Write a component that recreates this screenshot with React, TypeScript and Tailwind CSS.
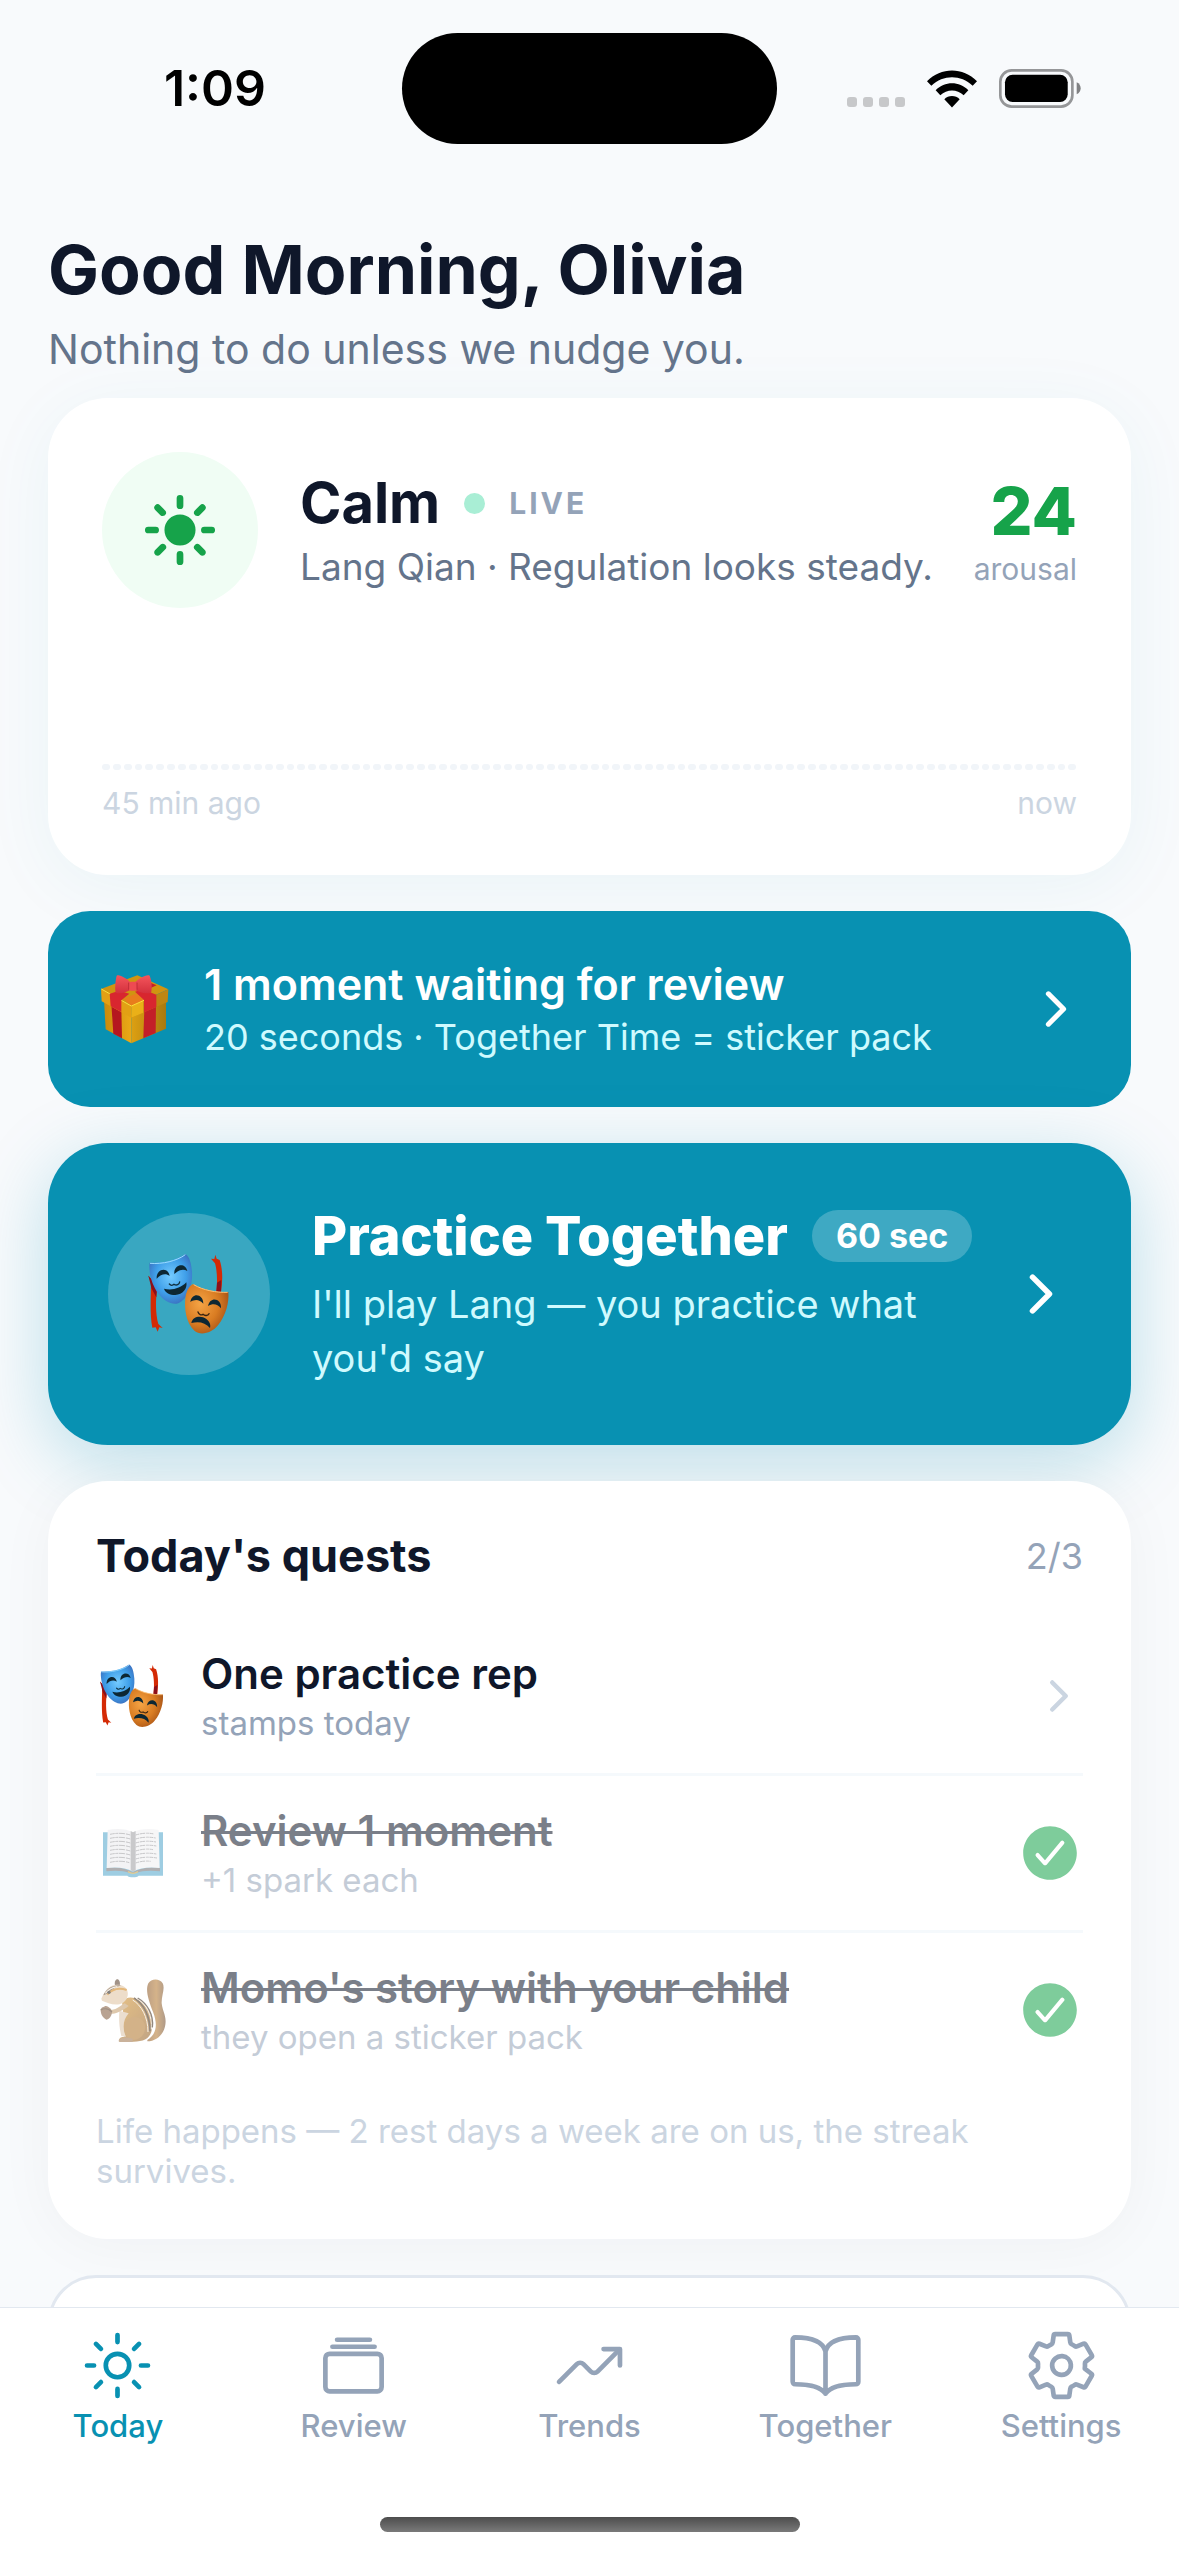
import type { ReactNode } from "react";
import {
  IoAlbumsOutline,
  IoBookOutline,
  IoCheckmarkCircle,
  IoChevronForward,
  IoSettingsOutline,
  IoSunny,
  IoSunnyOutline,
  IoTrendingUpOutline,
} from "react-icons/io5";

const tabs = [
  { label: "Today", icon: IoSunnyOutline, active: true },
  { label: "Review", icon: IoAlbumsOutline, active: false },
  { label: "Trends", icon: IoTrendingUpOutline, active: false },
  { label: "Together", icon: IoBookOutline, active: false },
  { label: "Settings", icon: IoSettingsOutline, active: false },
];

// one slot per 30 seconds, nothing recorded yet
const samples = Array.from({ length: 90 }, () => 0);

type Quest = { title: string; note: string; icon: ReactNode; done: boolean };

function GiftIcon() {
  return (
    <svg viewBox="48 69 216 216" className="size-[72px] shrink-0 overflow-visible" aria-hidden="true">
      <defs>
        <linearGradient id="giftLeft" x1="0" y1="0" x2="1" y2="0">
          <stop offset="0" stopColor="#c98a0c" />
          <stop offset="1" stopColor="#eba917" />
        </linearGradient>
        <linearGradient id="giftRight" x1="0" y1="0" x2="1" y2="0">
          <stop offset="0" stopColor="#dda012" />
          <stop offset="1" stopColor="#a8790f" />
        </linearGradient>
        <linearGradient id="giftBow" x1="0" y1="0" x2="0" y2="1">
          <stop offset="0" stopColor="#f4555c" />
          <stop offset="1" stopColor="#d3303c" />
        </linearGradient>
      </defs>
      <path d="M72 150 L154 195 V280 L77 238 Z" fill="url(#giftLeft)" />
      <path d="M154 195 L258 152 V236 L154 280 Z" fill="url(#giftRight)" />
      <path d="M94 160 L124 178 L126 265 L100 251 Z" fill="#b5161f" />
      <path d="M193 178 L228 164 L227 249 L190 265 Z" fill="#c31f28" />
      <path d="M63 117 L172 76 L265 118 L154 168 Z" fill="#d09411" />
      <path d="M130 146 L190 122 L212 142 L154 168 Z" fill="#e87d1c" />
      <path d="M63 117 L154 168 V203 L65 154 Z" fill="#e2a014" />
      <path d="M154 168 L265 118 L263 156 L154 203 Z" fill="#bd8612" />
      <path d="M154 168 L190 152 V188 L154 203 Z" fill="#eab018" />
      <path d="M64 117 L154 168 L192 151" fill="none" stroke="#ffe03a" strokeWidth="3" />
      <path d="M89 131 L118 122 L148 131 L124 151 V186 L92 169 Z" fill="#d8262f" />
      <path d="M165 125 L188 118 L229 134 V171 L192 187 V150 Z" fill="#d8262f" />
      <path d="M200 94 L230 106 L212 114 Z" fill="#c3202b" />
      <path d="M155 101 C140 84 117 72 110 77 C106 92 104 116 107 128 C122 134 141 126 155 117 Z" fill="url(#giftBow)" />
      <path d="M160 101 C176 85 200 72 209 77 C215 91 217 116 213 128 C196 134 175 126 161 117 Z" fill="url(#giftBow)" />
      <rect x="145" y="95" width="27" height="27" rx="9" fill="#ee4a52" />
      <path d="M146 98 V119 M171 98 V119" stroke="#a91d2c" strokeWidth="2" />
    </svg>
  );
}

function MasksIcon({ className }: { className: string }) {
  return (
    <svg viewBox="137 156 252 252" className={`shrink-0 overflow-visible ${className}`} aria-hidden="true">
      <defs>
        <radialGradient id="maskBlue" cx="0.5" cy="0.45" r="0.65">
          <stop offset="0" stopColor="#74cbff" />
          <stop offset="0.55" stopColor="#3f9fe9" />
          <stop offset="1" stopColor="#3a63b4" />
        </radialGradient>
        <radialGradient id="maskOrange" cx="0.35" cy="0.4" r="0.75">
          <stop offset="0" stopColor="#f5a445" />
          <stop offset="0.55" stopColor="#d97c22" />
          <stop offset="1" stopColor="#9c4a14" />
        </radialGradient>
      </defs>
      <path
        d="M141 227 L153 240 L167 264 C163 300 162 340 171 372 L184 384 L174 382 L169 395 L163 382 L153 383 C145 340 149 290 149 246 Z"
        fill="#d42a05"
      />
      <path d="M141 227 L155 243 L167 264 L165 292 L151 266 Z" fill="#8c0f1a" />
      <path d="M342 164 L346 176 L355 180 C365 210 364 244 359 276 H345 C349 244 347 210 341 190 L329 176 L339 177 Z" fill="#d42a05" />
      <path d="M360 240 L359 276 H345 L347 248 Z" fill="#8c0f1a" />
      <path d="M145 188 C184 190 224 181 252 162 C264 168 270 190 272 216 C275 262 254 304 226 311 C190 315 155 272 146 222 C144 208 143 196 145 188 Z" fill="url(#maskBlue)" />
      <path d="M146 190 C184 193 226 183 252 164" fill="none" stroke="#9bdcff" strokeWidth="3" />
      <path d="M166 236 C164 206 200 198 205 228 C194 219 180 221 166 236 Z" fill="#0d2733" />
      <path d="M219 222 C216 193 252 185 258 213 C247 207 234 208 219 222 Z" fill="#0d2733" />
      <path d="M204 252 C208 257 214 257 218 253 C226 258 234 253 235 246" fill="none" stroke="#10303f" strokeWidth="4" strokeLinecap="round" />
      <path d="M188 266 C210 272 238 266 255 247 C259 266 244 284 222 285 C205 285 192 278 188 266 Z" fill="#0d2733" />
      <path d="M275 252 C304 270 342 277 381 276 C384 306 374 346 350 376 C332 399 298 408 280 393 C252 367 249 320 252 296 C253 278 262 258 275 252 Z" fill="url(#maskOrange)" />
      <path d="M277 254 C306 271 344 278 379 277" fill="none" stroke="#ffc277" strokeWidth="3" />
      <path d="M267 306 C271 276 306 280 306 311 C294 298 281 297 267 306 Z" fill="#0d2733" />
      <path d="M320 318 C326 288 361 294 359 325 C348 311 334 310 320 318 Z" fill="#0d2733" />
      <path d="M290 336 C292 344 300 346 305 343 C310 348 320 348 323 341" fill="none" stroke="#3b2410" strokeWidth="4" strokeLinecap="round" />
      <path d="M270 369 C274 348 300 346 315 357 C325 364 329 376 326 384 C312 367 292 363 270 369 Z" fill="#0d2733" />
    </svg>
  );
}

function OpenBookIcon() {
  return (
    <svg viewBox="48 531 216 216" className="size-[72px] shrink-0" aria-hidden="true">
      <path d="M69 577 H249 V707 H176 C172 713 146 713 142 707 H69 Z" fill="#4fa6cc" />
      <path d="M79 684 C108 680 138 684 158 697 C180 684 210 680 240 684 V694 C212 690 186 692 168 699 H149 C130 692 106 690 79 694 Z" fill="#6f6f72" />
      <path d="M83 570 C110 564 140 566 159 577 V694 C138 683 110 680 80 684 Z" fill="#ebebee" />
      <path d="M236 570 C208 564 178 566 159 577 V694 C180 683 210 680 239 684 Z" fill="#f0f0f2" />
      <path d="M152 573 L159 577 L167 573 V690 L159 695 L152 690 Z" fill="#9d9da1" />
      <path
        d="M90 583 Q122 576 151 585 M90 595 Q122 588 151 597 M90 607 Q122 600 151 609 M90 619 Q122 612 151 621 M90 631 Q122 624 151 633 M90 643 Q122 636 151 645 M90 655 Q122 648 151 657 M90 667 Q122 660 148 668"
        fill="none"
        stroke="#9a9a9e"
        strokeWidth="3"
        strokeDasharray="14 2 9 2 18 3"
      />
      <path
        d="M167 585 Q196 576 222 582 M167 597 Q196 588 227 594 M167 609 Q196 600 228 606 M167 621 Q196 612 229 618 M167 633 Q196 624 219 629 M167 645 Q196 636 229 642 M167 657 Q196 648 231 654 M167 669 Q190 661 212 664"
        fill="none"
        stroke="#9a9a9e"
        strokeWidth="3"
        strokeDasharray="11 2 16 3 8 2"
      />
      <path d="M144 695 Q159 705 174 695" fill="none" stroke="#c9a53c" strokeWidth="4" />
    </svg>
  );
}

function ChipmunkIcon() {
  return (
    <svg viewBox="48 1002 216 216" className="size-[72px] shrink-0" aria-hidden="true">
      <defs>
        <linearGradient id="chipmunkTail" x1="0" y1="0" x2="1" y2="0">
          <stop offset="0" stopColor="#8a5422" />
          <stop offset="0.5" stopColor="#b3752a" />
          <stop offset="1" stopColor="#6f4826" />
        </linearGradient>
        <linearGradient id="chipmunkBody" x1="0" y1="0" x2="1" y2="1">
          <stop offset="0" stopColor="#cf8b22" />
          <stop offset="1" stopColor="#8f5a20" />
        </linearGradient>
      </defs>
      <path
        d="M202 1200 C232 1182 232 1150 220 1118 C204 1078 196 1050 205 1030 C213 1016 238 1014 248 1030 C256 1046 244 1066 245 1090 C248 1116 260 1128 256 1154 C252 1182 230 1204 202 1204 Z"
        fill="url(#chipmunkTail)"
      />
      <path d="M126 1084 C146 1062 178 1074 196 1098 C214 1122 222 1148 214 1176 C206 1198 190 1204 160 1205 H118 C114 1198 120 1190 134 1190 C118 1170 116 1146 130 1124 Z" fill="url(#chipmunkBody)" />
      <path d="M118 1112 C116 1140 118 1164 124 1188 L138 1190 C126 1164 130 1138 146 1120 Z" fill="#dcc4a8" />
      <path d="M136 1146 C150 1124 184 1126 194 1152 C200 1178 184 1198 160 1200 C132 1194 128 1166 136 1146 Z" fill="#b07428" />
      <path d="M162 1074 C192 1092 210 1130 210 1174" fill="none" stroke="#3a2716" strokeWidth="5" />
      <path d="M168 1074 C200 1092 218 1128 214 1168" fill="none" stroke="#f6ead8" strokeWidth="3" />
      <path d="M158 1080 C184 1096 204 1130 204 1176" fill="none" stroke="#f6ead8" strokeWidth="3" />
      <path d="M173 1074 C202 1090 222 1126 217 1162" fill="none" stroke="#3a2716" strokeWidth="4" />
      <path d="M105 1036 C102 1024 108 1016 114 1018 C120 1022 121 1030 119 1036 Z" fill="#553a26" />
      <path d="M64 1076 C70 1064 78 1046 94 1038 C112 1030 136 1036 142 1052 C148 1070 136 1088 118 1093 C98 1096 80 1088 66 1082 Z" fill="#dfc3a0" />
      <path d="M70 1066 C80 1044 100 1034 124 1036 C108 1040 96 1048 88 1058 Z" fill="#553a26" />
      <path d="M82 1064 C96 1048 116 1042 140 1050" fill="none" stroke="#cf7f10" strokeWidth="6" />
      <path d="M76 1060 C86 1048 98 1042 112 1040" fill="none" stroke="#f6ead8" strokeWidth="4" />
      <circle cx="87" cy="1057" r="5" fill="#1f1a17" />
      <path d="M146 1098 C128 1112 108 1122 90 1122 C82 1118 86 1110 94 1110 C112 1108 124 1096 134 1090 Z" fill="#c49c6a" />
      <path d="M62 1110 C64 1100 72 1102 75 1098 C82 1098 94 1104 96 1114 C96 1128 88 1138 80 1139 C68 1134 62 1122 62 1110 Z" fill="#80593a" />
      <path d="M62 1110 C72 1104 86 1106 96 1116" fill="none" stroke="#54371f" strokeWidth="4" />
      <path d="M116 1204 C116 1192 136 1190 158 1196 V1206 H120 Z" fill="#a0744a" />
    </svg>
  );
}

const quests: Quest[] = [
  { title: "One practice rep", note: "stamps today", icon: <MasksIcon className="m-[3px] size-[66px]" />, done: false },
  { title: "Review 1 moment", note: "+1 spark each", icon: <OpenBookIcon />, done: true },
  { title: "Momo's story with your child", note: "they open a sticker pack", icon: <ChipmunkIcon />, done: true },
];

function StatusBar() {
  return (
    <header className="grid h-[177px] shrink-0 grid-cols-[1fr_375px_1fr] items-start pt-[33px]">
      <div className="flex h-[111px] items-center justify-center pl-7 text-[50px] font-semibold text-black">1:09</div>
      <div className="h-[111px] rounded-full bg-black" />
      <div className="flex h-[111px] items-center justify-center gap-[22px] pr-7">
        <svg viewBox="0 0 58 38" className="h-[38px] w-[58px]" fill="#c7c8ca" aria-hidden="true">
          <rect x="0" y="27" width="10" height="10" rx="3" />
          <rect x="16" y="27" width="10" height="10" rx="3" />
          <rect x="32" y="27" width="10" height="10" rx="3" />
          <rect x="48" y="27" width="10" height="10" rx="3" />
        </svg>
        <svg viewBox="320 86 150 113" className="h-[38px] w-[50px]" aria-label="Wi-Fi">
          <path d="M320 119 C362 76 428 76 470 119 L457 133 C421 99 369 99 333 133 Z" />
          <path d="M346 146 C373 118 417 118 444 146 L430 161 C410 142 380 142 360 161 Z" />
          <path d="M372 173 C384 160 406 160 418 173 L395 198 Z" />
        </svg>
        <svg viewBox="537 84 247 117" className="h-[39px] w-[82px]" aria-label="Battery full">
          <rect x="541" y="88" width="217" height="109" rx="34" fill="none" stroke="#959698" strokeWidth="8" />
          <rect x="555" y="101" width="189" height="82" rx="23" />
          <path d="M771 124 C787 130 787 154 771 160 Z" fill="#808183" />
        </svg>
      </div>
    </header>
  );
}

function RegulationCard() {
  return (
    <section className="mt-6 rounded-[60px] bg-white p-[54px] shadow-[0_12px_72px_rgba(8,145,178,0.06)]">
      <div className="flex items-center">
        <div className="flex size-[156px] shrink-0 items-center justify-center rounded-full bg-[#f0fdf4]">
          <IoSunny className="size-[78px] text-[#16a34a]" />
        </div>
        <div className="ml-[42px] min-w-0 flex-1">
          <div className="flex items-center">
            <h2 className="text-[56px] leading-[68px] font-bold text-[#0f172a]">Calm</h2>
            <span className="ml-6 size-[21px] rounded-full bg-[#a9eed5]" />
            <span className="ml-6 text-[30px] leading-[36px] font-bold tracking-widest text-[#94a3b8]">LIVE</span>
          </div>
          <p className="mt-[6px] text-[37px] leading-[48px] whitespace-nowrap text-[#64748b]">
            Lang Qian · Regulation looks steady.
          </p>
        </div>
        <div className="text-right">
          <div className="text-[66px] leading-[78px] font-extrabold text-[#16a34a]">24</div>
          <div className="text-[30px] leading-[38px] text-[#94a3b8]">arousal</div>
        </div>
      </div>
      <div className="mt-[42px] flex h-[120px] items-end gap-[3px]">
        {samples.map((value, i) => (
          <div key={i} className="min-h-[6px] flex-1 rounded-full bg-[#f1f5f9]" style={{ height: `${value}%` }} />
        ))}
      </div>
      <div className="mt-[15px] flex justify-between text-[30px] leading-[36px] text-[#cbd5e1]">
        <span>45 min ago</span>
        <span>now</span>
      </div>
    </section>
  );
}

function ReviewBanner() {
  return (
    <button className="mt-9 flex w-full items-center gap-9 rounded-[42px] bg-[#0891b2] p-12 text-left">
      <GiftIcon />
      <span className="flex-1">
        <span className="block text-[43px] leading-[50px] font-semibold text-white">1 moment waiting for review</span>
        <span className="mt-[6px] block text-[36px] leading-[44px] text-[#cffafe]">
          20 seconds · Together Time = sticker pack
        </span>
      </span>
      <IoChevronForward className="size-[54px] text-white" />
    </button>
  );
}

function PracticeCard() {
  return (
    <button className="mt-9 flex w-full items-center gap-[42px] rounded-[60px] bg-[#0891b2] p-[60px] text-left shadow-[0_18px_72px_rgba(8,145,178,0.25)]">
      <span className="flex size-[162px] shrink-0 items-center justify-center rounded-full bg-white/20">
        <MasksIcon className="size-[84px]" />
      </span>
      <span className="min-w-0 flex-1">
        <span className="flex items-center gap-6">
          <span className="text-[54px] leading-[66px] font-extrabold whitespace-nowrap text-white">Practice Together</span>
          <span className="rounded-full bg-white/22 px-6 py-[6px] text-[34px] leading-[40px] font-bold whitespace-nowrap text-white">
            60 sec
          </span>
        </span>
        <span className="mt-2 block text-[38px] leading-[54px] text-[#cffafe]">
          I'll play Lang — you practice what you'd say
        </span>
      </span>
      <IoChevronForward className="size-[60px] shrink-0 text-white" />
    </button>
  );
}

function QuestRow({ quest }: { quest: Quest }) {
  return (
    <li className="border-b-3 border-[#f5f9fc] last:border-b-0">
      <button className={`flex w-full items-center gap-[33px] py-[30px] text-left ${quest.done ? "opacity-55" : ""}`}>
        {quest.icon}
        <span className="flex-1">
          <span
            className={`block text-[42px] leading-[50px] font-semibold text-[#0f172a] ${quest.done ? "line-through decoration-[3px]" : ""}`}
          >
            {quest.title}
          </span>
          <span className="mt-1 block text-[33px] leading-[40px] text-[#94a3b8]">{quest.note}</span>
        </span>
        {quest.done ? (
          <IoCheckmarkCircle className="size-[66px] text-[#16a34a]" />
        ) : (
          <IoChevronForward className="size-[48px] text-[#cbd5e1]" />
        )}
      </button>
    </li>
  );
}

function QuestsCard() {
  return (
    <section className="mt-9 shrink-0 rounded-[60px] bg-white p-12 shadow-[0_6px_60px_rgba(15,23,42,0.04)]">
      <div className="mb-9 flex items-center justify-between">
        <h2 className="text-[45px] leading-[54px] font-bold text-[#0f172a]">Today's quests</h2>
        <span className="text-[36px] text-[#94a3b8]">2/3</span>
      </div>
      <ul>
        {quests.map((quest) => (
          <QuestRow key={quest.title} quest={quest} />
        ))}
      </ul>
      <p className="mt-6 text-[33px] leading-[40px] text-[#cbd5e1]">
        Life happens — 2 rest days a week are on us, the streak survives.
      </p>
    </section>
  );
}

function TabBar() {
  return (
    <nav className="relative shrink-0 border-t border-[#e2e8f0] bg-white pt-5 pb-6">
      <div className="grid grid-cols-5">
        {tabs.map(({ label, icon: Icon, active }) => (
          <a
            key={label}
            href="#"
            className={`flex flex-col items-center gap-[5px] ${active ? "text-[#0891b2]" : "text-[#94a3b8]"}`}
          >
            <Icon className="size-[75px]" />
            <span className="text-[31px] leading-[36px] font-medium">{label}</span>
          </a>
        ))}
      </div>
      {/* Home indicator */}
      <div className="mx-auto mt-[73px] h-[15px] w-[420px] rounded-full bg-gradient-to-b from-[#4d4d4d] to-[#7a7a7a]" />
    </nav>
  );
}

export default function App() {
  return (
    <div className="flex h-screen flex-col overflow-hidden bg-[#f8fafc] font-['Inter',sans-serif]">
      <StatusBar />
      <main className="min-h-0 flex-1 overflow-hidden px-12 pt-12">
        <h1 className="text-[68px] leading-[88px] font-bold text-[#0f172a]">Good Morning, Olivia</h1>
        <p className="mt-[11px] text-[41px] leading-[50px] text-[#64748b]">Nothing to do unless we nudge you.</p>
        <RegulationCard />
        <ReviewBanner />
        <PracticeCard />
        <QuestsCard />
        <section className="mt-9 h-[240px] rounded-[48px] border-3 border-[#e2e8f0] bg-white" />
      </main>
      <TabBar />
    </div>
  );
}
